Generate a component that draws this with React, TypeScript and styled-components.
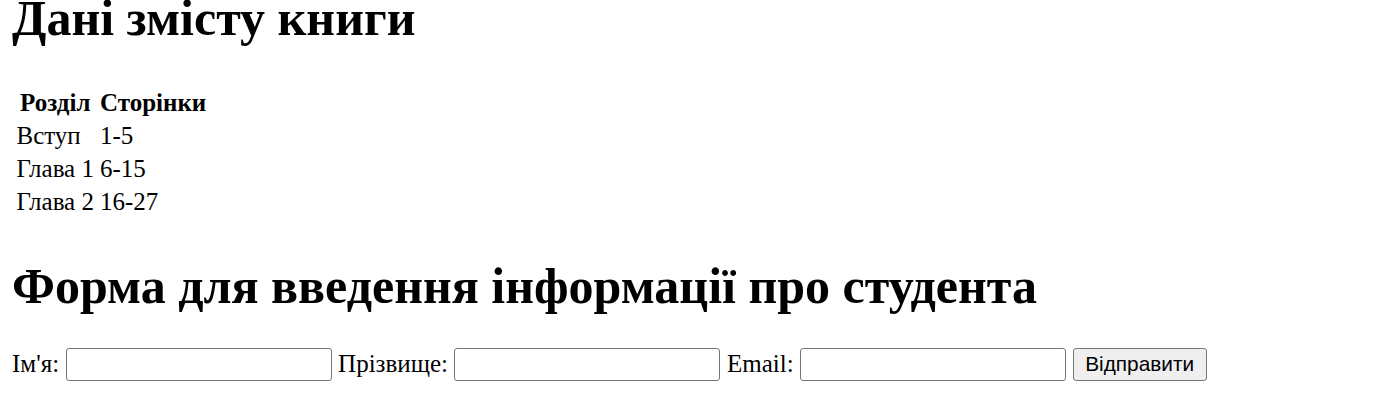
import React from "react";
import styled, { createGlobalStyle } from "styled-components";

const Global = createGlobalStyle`
  html, body { margin: 0; padding: 0; background: #fff; }
  body { font-family: "Liberation Serif", "Times New Roman", serif; color: #000; }
`;

const Page = styled.div`
  padding: 0 12px;
  font-size: 25px;
`;

const Title = styled.h1<{ $top: number; $bottom: number; $lh: number }>`
  font-size: 50px;
  font-weight: bold;
  line-height: ${(p) => p.$lh}px;
  margin: ${(p) => p.$top}px 0 ${(p) => p.$bottom}px 0;
  white-space: nowrap;
`;

const Table = styled.table`
  border-spacing: 3px;
  font-size: 25px;
  margin: 0;
`;

const Th = styled.th`
  padding: 1.5px;
  font-weight: bold;
  text-align: center;
  line-height: 27px;
`;

const Td = styled.td`
  padding: 1.5px;
  line-height: 27px;
`;

const Form = styled.form`
  display: flex;
  align-items: flex-start;
  font-size: 25px;
  margin: 32px 0 0 0;
`;

const Label = styled.label`
  line-height: 27px;
  margin: 2px 6.5px 0 0;
  white-space: nowrap;
`;

const Input = styled.input`
  width: 266px;
  height: 33px;
  box-sizing: border-box;
  border: 1px solid #767676;
  border-radius: 3px;
  margin: 0 6.5px 0 0;
  padding: 1px 2px;
  background: #fff;
  flex: none;
`;

const Button = styled.button`
  height: 33px;
  width: 134px;
  flex: none;
  box-sizing: border-box;
  border: 1px solid #767676;
  border-radius: 3px;
  background: #efefef;
  font-family: Arial, "Liberation Sans", sans-serif;
  font-size: 20.8px;
  color: #000;
  padding: 0 6px;
  margin: 0;
`;

const rows = [
  ["Вступ", "1-5"],
  ["Глава 1", "6-15"],
  ["Глава 2", "16-27"],
];

export default function App() {
  return (
    <>
      <Global />
      <Page>
        <Title $top={0} $bottom={48} $lh={36}>Дані змісту книги</Title>
        <Table>
          <thead>
            <tr>
              <Th>Розділ</Th>
              <Th>Сторінки</Th>
            </tr>
          </thead>
          <tbody>
            {rows.map(([a, b]) => (
              <tr key={a}>
                <Td>{a}</Td>
                <Td>{b}</Td>
              </tr>
            ))}
          </tbody>
        </Table>
        <Title $top={39} $bottom={0} $lh={57.5}>Форма для введення інформації про студента</Title>
        <Form onSubmit={(e) => e.preventDefault()}>
          <Label>Ім'я:</Label>
          <Input type="text" />
          <Label>Прізвище:</Label>
          <Input type="text" />
          <Label>Email:</Label>
          <Input type="email" />
          <Button type="submit">Відправити</Button>
        </Form>
      </Page>
    </>
  );
}
